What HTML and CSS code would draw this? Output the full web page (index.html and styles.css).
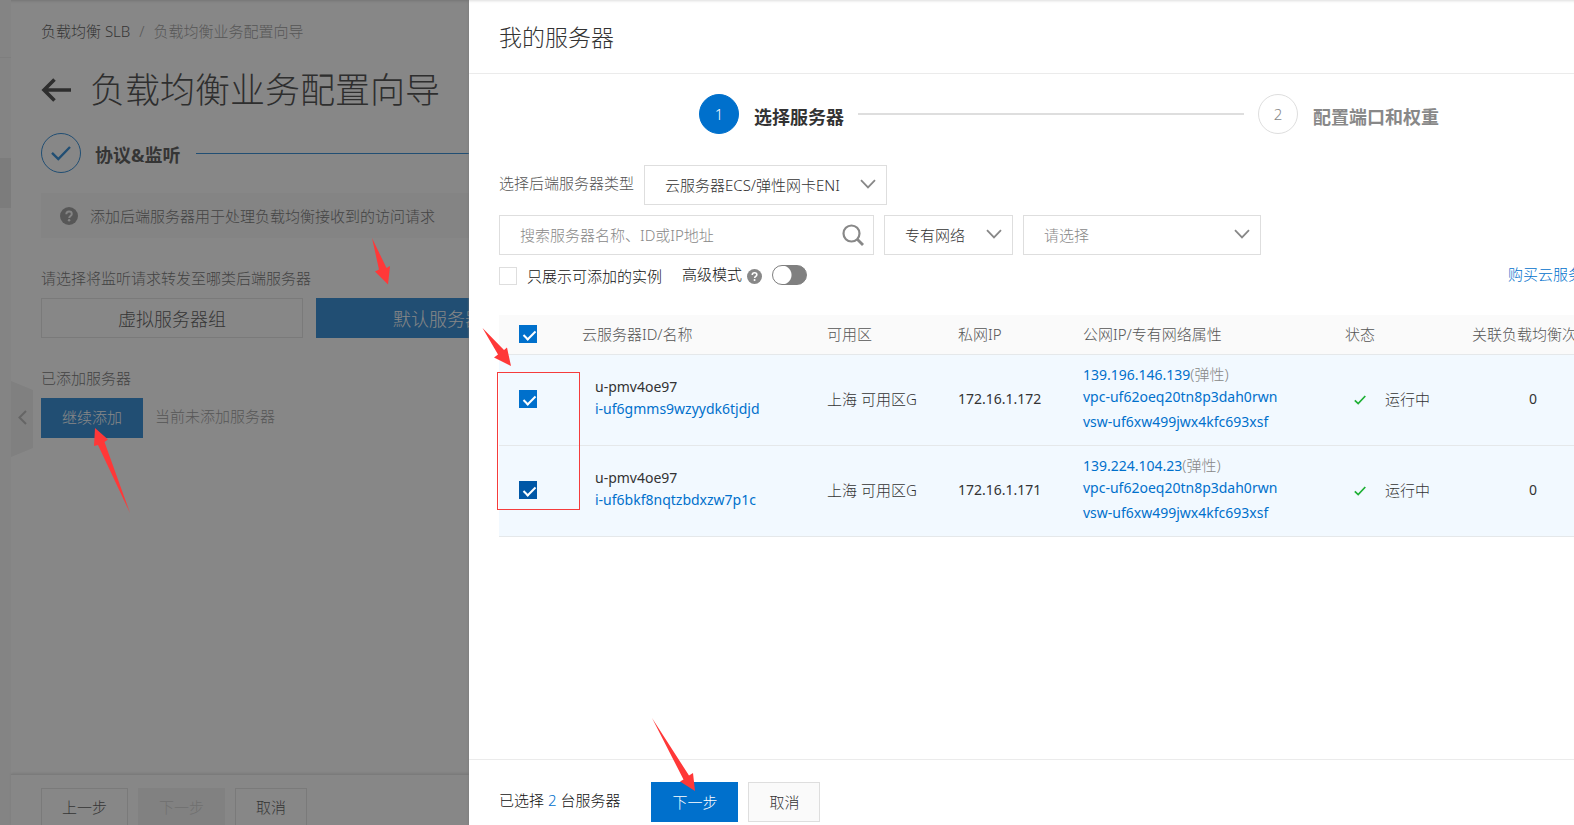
FILE: index.html
```html
<!DOCTYPE html>
<html lang="zh-CN">
<head>
<meta charset="utf-8">
<title>负载均衡业务配置向导</title>
<link rel="stylesheet" href="styles.css">
</head>
<body>
<svg class="defs" width="0" height="0" aria-hidden="true">
  <symbol id="chevron" viewBox="0 0 16 10"><path d="M1 1.2 8 8.4 15 1.2" fill="none" stroke="currentColor" stroke-width="1.8"/></symbol>
  <symbol id="help" viewBox="0 0 18 18"><circle cx="9" cy="9" r="9" fill="currentColor"/><path d="M6.3 7.2C6.3 5.5 7.5 4.5 9.1 4.5c1.6 0 2.7 1 2.7 2.4 0 2-2.6 2-2.6 4" fill="none" stroke="var(--help-mark)" stroke-width="1.9"/><circle cx="9.1" cy="13.3" r="1.2" fill="var(--help-mark)"/></symbol>
</svg>

<div class="page">
  <nav class="rail" aria-label="主导航"><div class="rail-top"></div><div class="rail-active"></div></nav>
  <main class="main">
    <div class="content">
      <nav class="crumbs" aria-label="面包屑"><a href="#">负载均衡 SLB</a><span class="sep">/</span><span>负载均衡业务配置向导</span></nav>
      <header class="title-row">
        <a class="back" href="#" aria-label="返回"><svg width="30" height="24" viewBox="0 0 30 24"><path d="M30 12H3M13.5 1.5 3 12l10.500 10.500" fill="none" stroke="currentColor" stroke-width="3.600"/></svg></a>
        <h1>负载均衡业务配置向导</h1>
      </header>
      <div class="page-step">
        <span class="step-done"><svg width="20" height="15" viewBox="0 0 20 15"><path d="M1 6.800 7.300 13 19 1" fill="none" stroke="currentColor" stroke-width="2.400"/></svg></span>
        <span class="page-step-label">协议&amp;监听</span>
        <span class="page-step-line"></span>
      </div>
      <div class="notice"><svg class="notice-icon"><use href="#help"/></svg><span>添加后端服务器用于处理负载均衡接收到的访问请求</span></div>
      <p class="field-title">请选择将监听请求转发至哪类后端服务器</p>
      <div class="group-tabs"><button type="button">虚拟服务器组</button><button type="button" class="selected">默认服务器组</button></div>
      <p class="field-title">已添加服务器</p>
      <div class="add-row"><button type="button" class="add">继续添加</button><span>当前未添加服务器</span></div>
    </div>
    <footer class="page-footer"><button type="button">上一步</button><button type="button" disabled>下一步</button><button type="button">取消</button></footer>
    <button type="button" class="collapse" aria-label="收起导航"><svg width="9" height="15" viewBox="0 0 9 15"><path d="M8 1 1.500 7.500 8 14" fill="none" stroke="currentColor" stroke-width="2"/></svg></button>
  </main>
</div>
<div class="mask"></div>

<section class="drawer" aria-labelledby="drawer-title">
  <header class="drawer-header"><h2 id="drawer-title">我的服务器</h2></header>
  <div class="drawer-body">
    <ol class="steps">
      <li class="step current"><span class="num">1</span><span class="step-label">选择服务器</span></li>
      <li class="step-line" aria-hidden="true"></li>
      <li class="step"><span class="num">2</span><span class="step-label">配置端口和权重</span></li>
    </ol>
    <form class="filters">
      <div class="filter-row type-row">
        <label for="type">选择后端服务器类型</label>
        <div class="select type"><select id="type"><option>云服务器ECS/弹性网卡ENI</option></select><svg><use href="#chevron"/></svg></div>
      </div>
      <div class="filter-row">
        <div class="search"><input type="text" aria-label="搜索服务器" placeholder="搜索服务器名称、ID或IP地址"><button type="button" aria-label="搜索"><svg width="22" height="22" viewBox="0 0 22 22"><circle cx="9.500" cy="9.500" r="8" fill="none" stroke="currentColor" stroke-width="2.200"/><path d="m15 15 6 6" stroke="currentColor" stroke-width="2.800"/></svg></button></div>
        <div class="select network"><select aria-label="网络类型"><option>专有网络</option></select><svg><use href="#chevron"/></svg></div>
        <div class="select vpc"><select aria-label="专有网络实例"><option>请选择</option></select><svg><use href="#chevron"/></svg></div>
      </div>
      <div class="options">
        <label class="only"><input type="checkbox" class="check">只展示可添加的实例</label>
        <label class="advanced" for="adv">高级模式</label><svg class="adv-help"><use href="#help"/></svg>
        <input id="adv" class="switch" type="checkbox" role="switch">
        <a class="buy" href="#">购买云服务器</a>
      </div>
    </form>
    <table class="servers">
      <colgroup><col class="c-check"><col class="c-name"><col class="c-zone"><col class="c-private"><col class="c-public"><col class="c-state"><col></colgroup>
      <thead><tr><th><input type="checkbox" class="check" checked aria-label="全选"></th><th>云服务器ID/名称</th><th>可用区</th><th>私网IP</th><th>公网IP/专有网络属性</th><th>状态</th><th>关联负载均衡次数</th></tr></thead>
      <tbody>
        <tr>
          <td><input type="checkbox" class="check" checked aria-label="选择 i-uf6gmms9wzyydk6tjdjd"></td>
          <td class="name">u-pmv4oe97<a href="#">i-uf6gmms9wzyydk6tjdjd</a></td>
          <td>上海 可用区G</td><td class="private">172.16.1.172</td>
          <td class="public"><div><a href="#">139.196.146.139</a><span>(弹性)</span></div><a href="#">vpc-uf62oeq20tn8p3dah0rwn</a><a href="#">vsw-uf6xw499jwx4kfc693xsf</a></td>
          <td class="state"><svg width="12" height="10" viewBox="0 0 12 10"><path d="M.8 5.300 4.200 8.600 11.300 1" fill="none" stroke="currentColor" stroke-width="1.700"/></svg>运行中</td><td class="count">0</td>
        </tr>
        <tr>
          <td><input type="checkbox" class="check pressed" checked aria-label="选择 i-uf6bkf8nqtzbdxzw7p1c"></td>
          <td class="name">u-pmv4oe97<a href="#">i-uf6bkf8nqtzbdxzw7p1c</a></td>
          <td>上海 可用区G</td><td class="private">172.16.1.171</td>
          <td class="public"><div><a href="#">139.224.104.23</a><span>(弹性)</span></div><a href="#">vpc-uf62oeq20tn8p3dah0rwn</a><a href="#">vsw-uf6xw499jwx4kfc693xsf</a></td>
          <td class="state"><svg width="12" height="10" viewBox="0 0 12 10"><path d="M.8 5.300 4.200 8.600 11.300 1" fill="none" stroke="currentColor" stroke-width="1.700"/></svg>运行中</td><td class="count">0</td>
        </tr>
      </tbody>
    </table>
  </div>
  <footer class="drawer-footer"><span class="chosen">已选择 <b>2</b> 台服务器</span><button type="button" class="primary">下一步</button><button type="button">取消</button></footer>
</section>

<svg class="marks" width="720" height="825" viewBox="0 0 720 825" aria-hidden="true">
  <g fill="#ff3838">
    <path d="M372 238 386.500 268 390 266 388 284.500 375 271.500 379 269.500Z"/>
    <path d="M130 513 104.500 442 108 439.500 95 428 94 446 98 445Z"/>
    <path d="M482.500 328 504 350 507 347.500 511 366 494 357.500 498 354.500Z"/>
    <path d="M652 718 689 775.500 693 773 695 791 680 781.500 683.500 779.500Z"/>
  </g>
  <rect x="497.500" y="372.500" width="82" height="137" fill="none" stroke="#f53c3c"/>
</svg>
</body>
</html>
```
FILE: styles.css
```css
* { box-sizing: border-box; }

:root {
  --blue: #0070cc;
  --line: #dedede;
  --help-mark: #fff;
}

body {
  margin: 0;
  height: 100vh;
  overflow: hidden;
  position: relative;
  font: 300 15px/22px "Noto Sans", "Noto Sans CJK SC", sans-serif;
  color: #333;
  background: #fff;
}

button, input, select { font: inherit; color: inherit; margin: 0; }
button { padding: 0; border: 1px solid var(--line); background: none; cursor: pointer; }
a { color: var(--blue); text-decoration: none; }
h1, h2, p, ol { margin: 0; padding: 0; font-weight: 300; }
ol { list-style: none; }
.defs { position: absolute; }

/* Wizard page */
.page { display: flex; height: 100%; box-shadow: inset 0 3px 3px -2px #ccc; }
.rail { width: 11px; flex: none; background: #f7f7f7; }
.rail-top { height: 58px; border-bottom: 1px solid #e8e8e8; }
.rail-active { height: 50px; margin-top: 100px; background: #e4e4e4; }
.main { position: relative; flex: 1; min-width: 0; display: flex; flex-direction: column; }
.content { flex: 1; padding: 20px 30px 0; }
.crumbs { display: flex; color: #888; }
.crumbs a { color: #333; }
.crumbs .sep { margin: 0 9px; }
.title-row { display: flex; align-items: center; gap: 19px; height: 46px; margin-top: 25px; }
.back { display: flex; color: #222; }
.title-row h1 { font-size: 35px; line-height: 46px; color: #222; }
.page-step { display: flex; align-items: center; height: 40px; margin-top: 20px; }
.step-done { width: 40px; height: 40px; display: flex; align-items: center; justify-content: center; border: 1px solid var(--blue); border-radius: 50%; color: var(--blue); }
.page-step-label { margin: 0 15px 0 14px; padding-top: 4px; font-size: 18px; font-weight: 700; }
.page-step-line { flex: 1; height: 1px; background: var(--blue); }
.notice { display: flex; align-items: center; gap: 12px; height: 45px; margin-top: 20px; padding-left: 19px; background: #f7f7f7; color: #555; --help-mark: #f7f7f7; }
.notice-icon { width: 18px; height: 18px; color: #888; }
.field-title { margin-top: 29px; color: #555; }
.group-tabs { display: flex; gap: 13px; margin-top: 9px; }
.group-tabs button { width: 262px; height: 40px; padding-top: 2px; font-size: 18px; }
.group-tabs .selected, .add { background: var(--blue); border-color: var(--blue); color: #fff; }
.add-row { display: flex; align-items: center; gap: 12px; margin-top: 9px; color: #888; }
.add-row span { padding-bottom: 4px; }
.add { width: 102px; height: 40px; padding-bottom: 2px; }
.page-footer { display: flex; gap: 10px; height: 51px; padding: 13px 30px 0; border-top: 1px solid #e0e0e0; box-shadow: 0 -1px 2px #e4e4e4; overflow: hidden; }
.page-footer button { flex: none; height: 40px; padding: 0 20px 2px; }
.page-footer button:disabled { background: #f0f0f0; border-color: #f0f0f0; color: #c4c4c4; }
.collapse { position: absolute; left: 0; top: 381px; width: 22px; height: 76px; border: 0; background: #ededed; color: #aaa; clip-path: polygon(0 0, 100% 12%, 100% 88%, 0 100%); }
.mask { position: absolute; inset: 0; background: rgba(55, 55, 55, .6); }

/* Drawer */
.drawer { position: absolute; inset: 0 0 0 469px; display: flex; flex-direction: column; overflow: hidden; background: #fff; box-shadow: 0 0 2px #777, inset 0 3px 3px -2px #ddd; }
.drawer-header { padding: 20px 30px 19px; border-bottom: 1px solid #ebebeb; }
.drawer-header h2 { font-size: 23px; line-height: 34px; }
.drawer-body { flex: 1; width: 1200px; padding: 20px 30px 0; }
.steps { display: flex; align-items: center; justify-content: center; height: 40px; }
.step { display: flex; align-items: center; gap: 15px; color: #888; }
.num { display: flex; align-items: center; justify-content: center; width: 40px; height: 40px; border: 1px solid var(--line); border-radius: 50%; }
.step-label { padding-top: 5px; font-size: 18px; font-weight: 700; }
.current { color: #333; }
.current .num { background: var(--blue); border-color: var(--blue); color: #fff; }
.step-line { width: 386px; height: 2px; margin: 0 14px; background: var(--line); }
.filters { margin-top: 31px; }
.filter-row { display: flex; align-items: center; gap: 10px; margin-bottom: 10px; }
.type-row label { padding-bottom: 4px; color: #555; }
.select { position: relative; height: 40px; }
.select select { width: 100%; height: 40px; padding: 0 40px 1px 20px; appearance: none; border: 1px solid var(--line); border-radius: 0; background: #fff; }
.select svg { position: absolute; right: 11px; top: 14px; width: 16px; height: 10px; color: #888; pointer-events: none; }
.type { width: 243px; }
.network { width: 129px; }
.vpc { width: 238px; }
.vpc select { color: #888; }
.search { display: flex; align-items: center; width: 375px; height: 40px; border: 1px solid var(--line); }
.search input { flex: 1; min-width: 0; height: 38px; padding: 0 0 0 20px; border: 0; background: none; }
.search input::placeholder { color: #888; opacity: 1; }
.search button { display: flex; padding: 0 9px; border: 0; color: #888; }
.options { display: flex; align-items: center; height: 22px; color: #111; }
.only { display: flex; align-items: center; gap: 10px; margin-right: 20px; }
.advanced, .buy { padding-bottom: 4px; }
.check { appearance: none; flex: none; display: block; width: 18px; height: 18px; border: 1px solid var(--line); background: #fff; }
.check:checked { border-color: var(--blue); background: var(--blue); position: relative; }
.check:checked::after { content: ""; position: absolute; left: 6px; top: 2px; width: 5px; height: 10px; border: solid #fff; border-width: 0 2px 2px 0; transform: rotate(45deg); }
.check.pressed { background: #0057a6; border-color: #0057a6; }
.adv-help { width: 15px; height: 15px; margin: 0 10px 0 5px; color: #888; }
.switch { appearance: none; width: 35px; height: 20px; margin-bottom: 2px; border: 1px solid #808080; border-radius: 10px; background: radial-gradient(circle at 9px 9px, #fff 9px, #808080 10px); }
.buy { width: 131px; margin-left: auto; }

.servers { width: 100%; margin-top: 28px; border-collapse: collapse; table-layout: fixed; }
.servers th { height: 39px; padding: 0; font-weight: 300; text-align: left; color: #555; background: #fafafa; border-bottom: 1px solid #e5e8ea; }
.servers td { height: 91px; padding: 0 0 1px; background: #f2f9ff; border-bottom: 1px solid #e5e8ea; }
.servers .check { margin-left: 20px; }
.c-check { width: 83px; }
.c-name { width: 245px; }
.c-zone { width: 131px; }
.c-private { width: 125px; }
.c-public { width: 262px; }
.c-state { width: 127px; }
.servers .name { padding: 0 0 4px 13px; }
.servers .public { padding-bottom: 4px; }
.name, .private, .public, .count { font-size: 14px; font-weight: 400; }
.name a, .public > a { display: block; }
.public > a:last-child { margin-top: 3px; }
.public span { font-size: 15px; font-weight: 300; color: #888; }
.servers .state { padding-left: 9px; }
.state svg { margin-right: 19px; color: #1eb035; }
.servers .count { padding-left: 57px; }

.drawer-footer { display: flex; align-items: center; gap: 10px; height: 66px; padding: 19px 30px 0; border-top: 1px solid #ebebeb; }
.drawer-footer button { height: 40px; padding: 0 20px; background: #fafafa; }
.drawer-footer .primary { background: var(--blue); border-color: var(--blue); color: #fff; }
.chosen { margin-right: 21px; padding-bottom: 4px; color: #111; }
.chosen b { font-weight: 300; color: var(--blue); }

.marks { position: absolute; left: 0; top: 0; pointer-events: none; }
```
